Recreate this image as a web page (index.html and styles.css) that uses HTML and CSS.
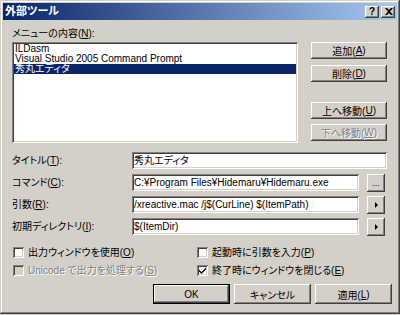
FILE: index.html
```html
<!DOCTYPE html>
<html lang="ja">
<head>
<meta charset="utf-8">
<title>外部ツール</title>
<link rel="stylesheet" href="styles.css">
</head>
<body>
<div class="window">
  <div class="titlebar">
    <span class="title">外部ツール</span>
    <div class="tb-buttons">
      <span class="tb-btn">?</span>
      <span class="tb-btn close">
        <svg width="8" height="7" viewBox="0 0 8 7"><path d="M0 0h2l2 2 2-2h2L5 3.5 8 7H6L4 5 2 7H0l3-3.5z" fill="#000"/></svg>
      </span>
    </div>
  </div>
  <div class="content">
    <div class="lbl-menu">メニューの内容(<u>N</u>):</div>
    <div class="top-row">
      <div class="listbox">
        <div class="item">ILDasm</div>
        <div class="item">Visual Studio 2005 Command Prompt</div>
        <div class="item sel">秀丸エディタ</div>
      </div>
      <div class="side-btns">
        <div class="btn side">追加(<u>A</u>)</div>
        <div class="btn side">削除(<u>D</u>)</div>
        <div class="btn side move">上へ移動(<u>U</u>)</div>
        <div class="btn side last disabled">下へ移動(<u>W</u>)</div>
      </div>
    </div>
    <div class="fields">
      <div class="frow">
        <div class="flabel">タイトル(<u>T</u>):</div>
        <div class="field wide">秀丸エディタ</div>
      </div>
      <div class="frow">
        <div class="flabel">コマンド(<u>C</u>):</div>
        <div class="field">C:¥Program Files¥Hidemaru¥Hidemaru.exe</div>
        <div class="btn mini dots">...</div>
      </div>
      <div class="frow">
        <div class="flabel">引数(<u>R</u>):</div>
        <div class="field">/xreactive.mac /j$(CurLine) $(ItemPath)</div>
        <div class="btn mini"><span class="tri"></span></div>
      </div>
      <div class="frow">
        <div class="flabel">初期ディレクトリ(<u>I</u>):</div>
        <div class="field">$(ItemDir)</div>
        <div class="btn mini"><span class="tri"></span></div>
      </div>
    </div>
    <div class="checks">
      <div class="chk"><span class="box"></span>出力ウィンドウを使用(<u>O</u>)</div>
      <div class="chk"><span class="box"></span>起動時に引数を入力(<u>P</u>)</div>
      <div class="chk disabled"><span class="box"></span>Unicode で出力を処理する(<u>S</u>)</div>
      <div class="chk"><span class="box"><svg width="7" height="7" viewBox="0 0 7 7"><path d="M0 2.5l2.5 2.5L7 0.5v2L2.5 7 0 4.5z" fill="#000"/></svg></span>終了時にウィンドウを閉じる(<u>E</u>)</div>
    </div>
    <div class="bottom-btns">
      <div class="btn big default">OK</div>
      <div class="btn big">キャンセル</div>
      <div class="btn big">適用(<u>L</u>)</div>
    </div>
  </div>
</div>
</body>
</html>
```

FILE: styles.css
```css
* { box-sizing: border-box; }
html, body {
  margin: 0;
  padding: 0;
  background: #d4d0c8;
}
body {
  font-family: "Liberation Sans", "Noto Sans CJK JP", sans-serif;
  font-size: 10px;
  font-feature-settings: "palt";
  color: #000;
}
u { text-decoration: underline; text-underline-offset: 1px; }

.window {
  width: 400px;
  height: 314px;
  padding: 3px;
  background: #d4d0c8;
  box-shadow: inset -1px -1px #404040, inset 1px 1px #d4d0c8,
              inset -2px -2px #808080, inset 2px 2px #ffffff;
}

.titlebar {
  height: 17px;
  background: linear-gradient(to right, #0a246a, #a6caf0);
  display: flex;
  align-items: center;
  justify-content: space-between;
  padding: 0 2px 0 2px;
}
.title {
  color: #fff;
  font-weight: bold;
  font-size: 11px;
  line-height: 17px;
}
.tb-buttons { display: flex; gap: 2px; }
.tb-btn {
  width: 14px;
  height: 12px;
  background: #d4d0c8;
  box-shadow: inset -1px -1px #404040, inset 1px 1px #ffffff,
              inset -2px -2px #808080, inset 2px 2px #d4d0c8;
  display: flex;
  align-items: center;
  justify-content: center;
  font-weight: bold;
  font-size: 10px;
  line-height: 12px;
  font-family: "Liberation Sans", sans-serif;
}
.tb-btn.close { padding-left: 1px; }

.content {
  padding: 7px 0 0 9px;
}
.lbl-menu {
  line-height: 13px;
  height: 13px;
  margin-bottom: 2px;
}

.top-row {
  display: flex;
  align-items: flex-start;
  gap: 13px;
  height: 101px;
}
.listbox {
  width: 286px;
  height: 101px;
  background: #fff;
  padding: 2px 2px;
  box-shadow: inset 1px 1px #808080, inset -1px -1px #ffffff,
              inset 2px 2px #404040, inset -2px -2px #d4d0c8;
}
.item {
  height: 10px;
  line-height: 10px;
  padding-left: 1px;
  white-space: nowrap;
}
.item.sel {
  background: #0a246a;
  color: #fff;
}

.side-btns {
  width: 76px;
  display: flex;
  flex-direction: column;
}
.btn {
  background: #d4d0c8;
  box-shadow: inset -1px -1px #404040, inset 1px 1px #ffffff,
              inset -2px -2px #808080, inset 2px 2px #d4d0c8;
  display: flex;
  align-items: center;
  justify-content: center;
  white-space: nowrap;
}
.btn.side {
  height: 17px;
  margin-bottom: 6px;
}
.btn.side.move { margin-top: 14px; margin-bottom: 5px; }
.btn.side.last { margin-bottom: 0; }
.btn.disabled, .chk.disabled {
  color: #808080;
  text-shadow: 1px 1px #ffffff;
}

.fields {
  margin-top: 9px;
  display: flex;
  flex-direction: column;
  gap: 5px;
}
.frow {
  display: flex;
  align-items: center;
  height: 17px;
}
.flabel {
  width: 120px;
  line-height: 17px;
  white-space: nowrap;
}
.field {
  width: 227px;
  height: 17px;
  background: #fff;
  line-height: 17px;
  padding-left: 2px;
  white-space: nowrap;
  overflow: hidden;
  box-shadow: inset 1px 1px #808080, inset -1px -1px #ffffff,
              inset 2px 2px #404040, inset -2px -2px #d4d0c8;
}
.field.wide { width: 255px; }
.btn.mini {
  width: 18px;
  height: 18px;
  margin-left: 8px;
}
.btn.dots {
  font-size: 9px;
  line-height: 10px;
  align-items: flex-end;
  padding-bottom: 4px;
}
.tri {
  width: 0;
  height: 0;
  border-top: 3px solid transparent;
  border-bottom: 3px solid transparent;
  border-left: 3px solid #000;
}

.checks {
  margin-top: 12px;
  display: grid;
  grid-template-columns: 184px 1fr;
  row-gap: 7px;
  padding-left: 1px;
}
.chk {
  display: flex;
  align-items: center;
  height: 11px;
  line-height: 11px;
  white-space: nowrap;
}
.box {
  width: 11px;
  height: 11px;
  margin-right: 4px;
  background: #fff;
  flex: none;
  display: flex;
  align-items: center;
  justify-content: center;
  box-shadow: inset 1px 1px #808080, inset -1px -1px #ffffff,
              inset 2px 2px #404040, inset -2px -2px #d4d0c8;
  text-shadow: none;
}
.chk.disabled .box { background: #d4d0c8; }

.bottom-btns {
  margin-top: 8px;
  display: flex;
  justify-content: flex-end;
  gap: 4px;
  padding-right: 5px;
}
.btn.big {
  width: 77px;
  height: 20px;
}
.btn.default {
  box-shadow: inset 1px 1px #000, inset -1px -1px #000,
              inset -2px -2px #404040, inset 2px 2px #ffffff,
              inset -3px -3px #808080;
}
```
